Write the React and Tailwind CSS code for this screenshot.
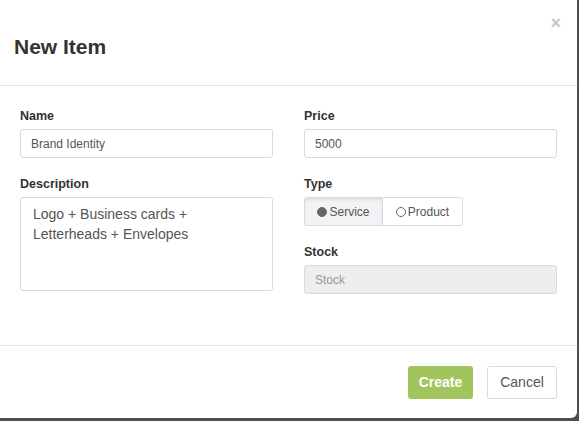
import React, { useState } from "react"

const inputClass =
  "w-full h-[29px] px-[10px] border border-[#d9d9e3] rounded-[3px] text-[12px] text-[#555] bg-white outline-none"

const App = () => {
  const [type, setType] = useState("service")

  return (
    <div className="w-[579px] h-[421px] bg-[#4b4e58] font-['Liberation_Sans',Arial,sans-serif]">
      <div className="w-[577px] h-[418px] bg-white rounded-br-[6px] flex flex-col relative">
        <button className="absolute right-[16px] top-[14px] text-[18px] font-bold leading-none text-[#c8c8c8]">
          ×
        </button>

        <div className="h-[86px] border-b border-[#e3e3e3] px-[14px] pt-[33px]">
          <h1 className="text-[21px] leading-[28px] font-bold text-[#333]">New Item</h1>
        </div>

        <div className="flex-1 grid grid-cols-2 gap-x-[31px] px-[20px] pt-[22px]">
          <div className="flex flex-col">
            <label className="text-[12.5px] font-bold text-[#333] leading-[16px] mb-[5px]">Name</label>
            <input className={inputClass} defaultValue="Brand Identity" />

            <label className="text-[12.5px] font-bold text-[#333] leading-[16px] mt-[18px] mb-[5px]">
              Description
            </label>
            <textarea
              className="w-full h-[94px] px-[12px] py-[6px] border border-[#d9d9e3] rounded-[3px] text-[14px] leading-[20px] text-[#555] resize-none outline-none"
              defaultValue={"Logo + Business cards +\nLetterheads + Envelopes"}
            />
          </div>

          <div className="flex flex-col">
            <label className="text-[12.5px] font-bold text-[#333] leading-[16px] mb-[5px]">Price</label>
            <input className={inputClass} defaultValue="5000" />

            <label className="text-[12.5px] font-bold text-[#333] leading-[16px] mt-[18px] mb-[5px]">Type</label>
            <div className="flex">
              <button
                onClick={() => setType("service")}
                className={
                  "h-[29px] w-[79px] flex items-center justify-center gap-[2px] border border-[#d9d9e3] rounded-l-[3px] text-[12px] text-[#555] " +
                  (type === "service" ? "bg-[#f3f3f6] shadow-[inset_0_2px_3px_rgba(0,0,0,0.08)]" : "bg-white")
                }
              >
                <span
                  className={
                    "w-[10px] h-[10px] rounded-full border border-[#666] " + (type === "service" ? "bg-[#666]" : "bg-white")
                  }
                />
                Service
              </button>
              <button
                onClick={() => setType("product")}
                className={
                  "h-[29px] w-[80px] flex items-center justify-center gap-[2px] border border-l-0 border-[#d9d9e3] rounded-r-[3px] text-[12px] text-[#555] " +
                  (type === "product" ? "bg-[#f3f3f6] shadow-[inset_0_2px_3px_rgba(0,0,0,0.08)]" : "bg-white")
                }
              >
                <span
                  className={
                    "w-[10px] h-[10px] rounded-full border border-[#666] " + (type === "product" ? "bg-[#666]" : "bg-white")
                  }
                />
                Product
              </button>
            </div>

            <label className="text-[12.5px] font-bold text-[#333] leading-[16px] mt-[18px] mb-[5px]">Stock</label>
            <input
              className="w-full h-[29px] px-[10px] border border-[#d9d9e3] rounded-[3px] text-[12px] bg-[#eeeeee] outline-none placeholder:text-[#999]"
              placeholder="Stock"
              disabled
            />
          </div>
        </div>

        <div className="h-[73px] border-t border-[#e3e3e3] flex items-start justify-end gap-[14px] px-[20px] pt-[20px]">
          <button className="h-[33px] w-[65px] rounded-[3px] bg-[#a0c55c] text-white text-[14px] font-bold">
            Create
          </button>
          <button className="h-[33px] w-[70px] rounded-[3px] border border-[#d9d9e3] bg-white text-[#555] text-[14px]">
            Cancel
          </button>
        </div>
      </div>
    </div>
  )
}

export default App
